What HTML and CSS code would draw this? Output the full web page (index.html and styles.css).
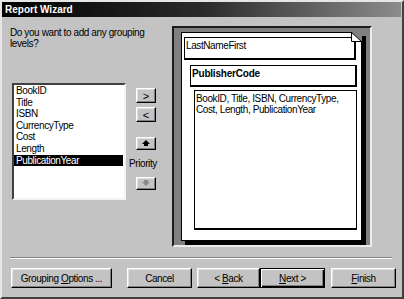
FILE: index.html
```html
<!DOCTYPE html>
<html lang="en">

<head>
    <meta charset="UTF-8">
    <title>Report Wizard</title>
    <link rel="stylesheet" href="styles.css">
</head>

<body>
    <div class="window">
        <!-- Title bar -->
        <div class="titlebar">Report Wizard</div>

        <!-- Main area -->
        <div class="main">
            <p class="question">Do you want to add any grouping levels?</p>

            <ul class="listbox">
                <li>BookID</li>
                <li>Title</li>
                <li>ISBN</li>
                <li>CurrencyType</li>
                <li>Cost</li>
                <li>Length</li>
                <li class="selected">PublicationYear</li>
            </ul>

            <div class="movers">
                <button class="btn move">&gt;</button>
                <button class="btn move">&lt;</button>
                <button class="btn arrow up">
                    <svg width="8" height="7" viewBox="0 0 8 7"><polygon points="4,0 8,4 6,4 6,6 2,6 2,4 0,4" fill="#000" /></svg>
                </button>
                <span class="priority">Priority</span>
                <button class="btn arrow">
                    <svg width="8" height="7" viewBox="0 0 8 7"><polygon points="2,0 6,0 6,2 8,2 4,6 0,2 2,2" fill="#8a8a8a" /></svg>
                </button>
            </div>

            <!-- Report preview -->
            <div class="preview">
                <div class="page">
                    <div class="group level1">LastNameFirst</div>
                    <div class="group level2">PublisherCode</div>
                    <div class="group detail">BookID, Title, ISBN, CurrencyType, Cost, Length, PublicationYear</div>
                    <svg class="fold" width="11" height="10" viewBox="0 0 11 10">
                        <polygon points="0,0 11,0 11,10" fill="#808080" />
                        <polygon points="0,0 11,10 0,10" fill="#fff" />
                        <polyline points="0.5,0 0.5,9.5 11,9.5" fill="none" stroke="#000" stroke-width="1" />
                        <line x1="0" y1="0" x2="11" y2="10" stroke="#000" stroke-width="1" />
                    </svg>
                </div>
            </div>
        </div>

        <div class="separator"></div>

        <!-- Wizard buttons -->
        <div class="buttons">
            <button class="btn wide">Grouping <u>O</u>ptions ...</button>
            <button class="btn cancel">Cancel</button>
            <button class="btn back">&lt; <u>B</u>ack</button>
            <button class="btn next"><u>N</u>ext &gt;</button>
            <button class="btn finish"><u>F</u>inish</button>
        </div>
    </div>
</body>

</html>
```

FILE: styles.css
```css
/* Report wizard dialog */
body {
    margin: 0;
    padding: 0;
    background-color: #c3c3c3;
    font-family: "Liberation Sans", Arial, sans-serif;
    font-size: 10px;
    letter-spacing: -0.4px;
    color: #000;
}

.window {
    box-sizing: border-box;
    width: 404px;
    height: 299px;
    border: 2px solid;
    border-color: #e6e6e6 #404040 #404040 #e6e6e6;
    background-color: #c3c3c3;
}

.titlebar {
    height: 15px;
    line-height: 15px;
    padding-left: 3px;
    margin-right: 1px;
    background: linear-gradient(to right, #000 0%, #2a2a2a 50%, #8c8c8c 100%);
    color: #fff;
    font-weight: bold;
    font-size: 10px;
    letter-spacing: 0;
}

/* Main grid: list, mover buttons, preview */
.main {
    display: grid;
    grid-template-columns: 116px 46px 200px;
    grid-template-rows: 57px 164px;
    padding: 9px 0 0 8px;
}

.question {
    grid-column: 1 / 3;
    grid-row: 1;
    margin: 1px 0 0;
    width: 150px;
    line-height: 11px;
}

.listbox {
    grid-column: 1;
    grid-row: 2;
    box-sizing: border-box;
    width: 114px;
    height: 117px;
    margin: 0 0 0 2px;
    padding: 0;
    list-style: none;
    background-color: #fff;
    border: 2px solid;
    border-color: #404040 #f4f4f4 #f4f4f4 #404040;
}

.listbox li {
    height: 11.6px;
    line-height: 11.6px;
    padding-left: 2px;
}

.listbox li.selected {
    background-color: #000;
    color: #fff;
    margin-right: 1px;
}

/* Buttons */
.btn {
    box-sizing: border-box;
    padding: 0;
    margin: 0;
    font-family: inherit;
    font-size: 10px;
    letter-spacing: -0.4px;
    color: #000;
    background-color: #c3c3c3;
    border: 1px solid;
    border-color: #fff #000 #000 #fff;
    box-shadow: inset -1px -1px #808080, inset 1px 1px #e0e0e0;
}

.movers {
    grid-column: 2;
    grid-row: 2;
    display: flex;
    flex-direction: column;
    align-items: flex-start;
    padding-top: 5px;
}

.move {
    width: 20px;
    height: 15px;
    margin: 0 0 4px 10px;
    font-size: 11px;
    letter-spacing: 0;
    line-height: 12px;
}

.arrow {
    width: 20px;
    height: 13px;
    margin-left: 10px;
    display: flex;
    align-items: center;
    justify-content: center;
}

.movers .up {
    margin-top: 11px;
}

.priority {
    margin: 8px 0 8px 3px;
    font-size: 10px;
}

/* Preview */
.preview {
    grid-column: 3;
    grid-row: 1 / 3;
    box-sizing: border-box;
    width: 200px;
    height: 221px;
    padding: 4px 0 0 7px;
    background-color: #808080;
    border: 2px solid;
    border-color: #1c1c1c #ececec #ececec #1c1c1c;
}

.page {
    position: relative;
    box-sizing: border-box;
    width: 181px;
    height: 209px;
    padding: 4px 0 0 2px;
    background-color: #fff;
    border: 1px solid #000;
    box-shadow: 4px 4px 0 #000;
}

.fold {
    position: absolute;
    top: -1px;
    right: -1px;
}

.group {
    box-sizing: border-box;
    border: 1px solid #000;
    border-right-width: 2px;
    border-bottom-width: 2px;
    line-height: 11px;
    padding: 2px 0 0 1px;
}

.level1 {
    width: 172px;
    height: 23px;
}

.level2 {
    width: 167px;
    height: 22px;
    margin: 5px 0 0 6px;
    font-weight: bold;
    letter-spacing: -0.2px;
}

.detail {
    width: 163px;
    height: 140px;
    margin: 3px 0 0 10px;
    border-right-width: 1px;
    padding-right: 4px;
}

.separator {
    height: 1px;
    margin: 10px 10px 0 8px;
    background-color: #808080;
    border-bottom: 1px solid #fff;
}

/* Bottom row */
.buttons {
    display: flex;
    padding: 9px 0 0 9px;
}

.buttons .btn {
    width: 65px;
    height: 20px;
}

.buttons .wide {
    width: 101px;
    margin-right: 15px;
}

.buttons .cancel {
    margin-right: 5px;
}

.buttons .back {
    width: 63px;
}

.buttons .next {
    border: 1px solid #000;
    box-shadow: inset 1px 1px #fff, inset -1px -1px #000, inset -2px -2px #808080;
    margin-right: 6px;
}
```
